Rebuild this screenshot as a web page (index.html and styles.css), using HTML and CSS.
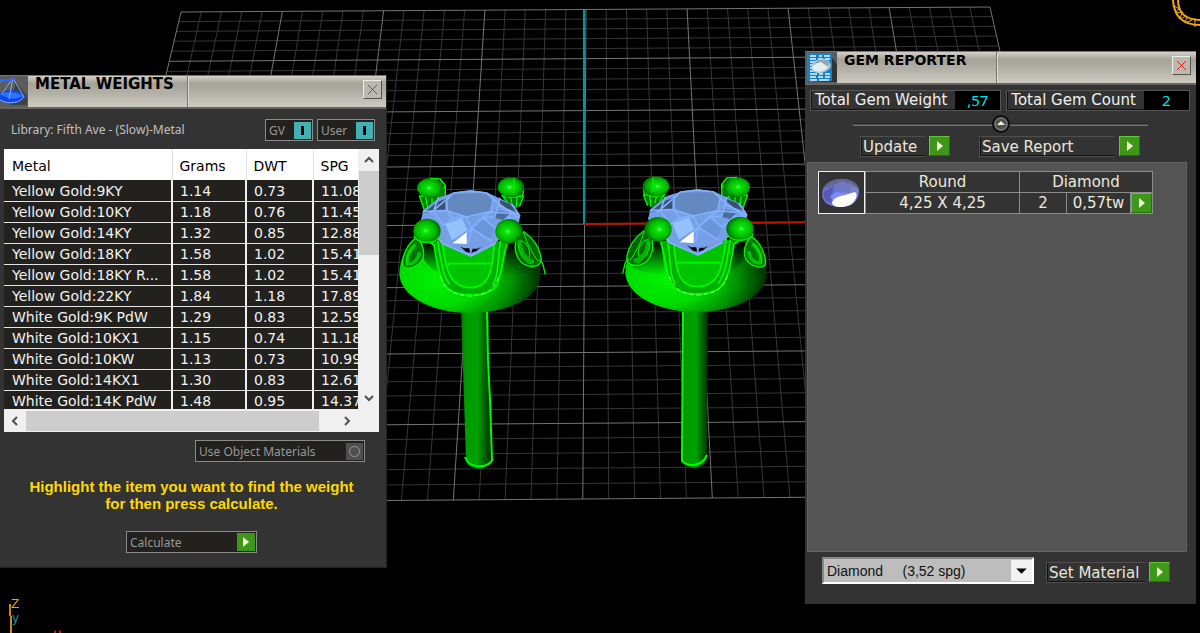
FILE: index.html
```html
<!DOCTYPE html>
<html lang="en">
<head>
<meta charset="utf-8">
<title>Metal Weights and Gem Reporter</title>
<link rel="stylesheet" href="styles.css">
</head>
<body>
<main class="workspace">
  <svg class="viewport" width="1200" height="633" viewBox="0 0 1200 633" aria-label="Model view">
    <defs>
      <radialGradient id="ball" cx=".45" cy=".5" r=".6">
        <stop offset="0" stop-color="#6cff6c"/><stop offset=".15" stop-color="#0be80b"/><stop offset=".6" stop-color="#00b800"/><stop offset="1" stop-color="#005000"/>
      </radialGradient>
      <radialGradient id="bowl-fill" gradientUnits="userSpaceOnUse" cx="150" cy="345" r="310" gradientTransform="translate(0 130) scale(1 .62)">
        <stop offset="0" stop-color="#00f400"/><stop offset=".4" stop-color="#00dc00"/><stop offset=".7" stop-color="#009000"/><stop offset="1" stop-color="#002400"/>
      </radialGradient>
      <linearGradient id="shank"><stop offset="0" stop-color="#007000"/><stop offset=".15" stop-color="#009c00"/><stop offset=".55" stop-color="#00a000"/><stop offset="1" stop-color="#002c00"/></linearGradient>
      <linearGradient id="shade" x2="0" y2="1"><stop offset="0" stop-color="#000"/><stop offset="1" stop-color="#003000" stop-opacity="0"/></linearGradient>
      <g id="back-prongs">
        <path d="M88 92 L104 138 L135 122 L166 92 L164 60 Z" fill="#007a00"/>
        <path d="M332 92 L368 132 L388 122 L401 88 L385 70 Z" fill="#007a00"/>
        <path d="M88 92 L104 138 M106 94 L114 130 M126 98 V124 M146 95 L138 118 M88 93 H128 L150 88 L166 62 L150 42 M166 62 V95 L130 125 M340 95 L352 112 M362 96 L366 118 M382 92 L378 128 M401 92 L388 125 M335 92 L362 98 L400 92 M401 72 L398 92" fill="none" stroke="#00fa00" stroke-width="4"/>
        <ellipse cx="121" cy="69" rx="40" ry="30" fill="url(#ball)"/>
        <ellipse cx="363" cy="67" rx="40" ry="30" fill="url(#ball)"/>
        <path d="M120 40 L150 42 L166 62 M372 40 V84" fill="none" stroke="#00f000" stroke-width="4"/>
      </g>
      <g id="bowl">
        <path d="M75 220 C46 246 28 288 28 328 C32 392 120 444 240 444 C362 444 450 394 452 330 C450 280 430 235 400 200 L345 230 H130 Z" fill="url(#bowl-fill)"/>
      </g>
      <g id="setting">
        <path d="M98 235 L132 232 L152 330 C125 315 100 290 96 265 Z" fill="url(#shade)"/>
        <path d="M352 230 L376 232 L392 285 L440 310 C410 325 365 330 338 335 Z" fill="url(#shade)"/>
        <path d="M80 218 C52 234 34 278 38 302 C50 318 84 306 97 284 C106 262 98 238 85 222 Z" fill="#007400" stroke="#00f400" stroke-width="4"/>
        <path d="M76 240 C56 256 48 280 54 296 C70 300 85 284 88 262" fill="none" stroke="#00c400" stroke-width="11"/>
        <path d="M80 234 C58 252 46 280 50 300" fill="none" stroke="#00f400" stroke-width="3"/>
        <path d="M402 200 C432 222 452 254 454 286 C448 310 412 308 392 290 C376 270 372 245 380 222 Z" fill="#006400" stroke="#00f400" stroke-width="4"/>
        <path d="M390 224 C388 258 404 282 432 292" fill="none" stroke="#00b400" stroke-width="12"/>
        <path d="M384 234 C386 268 402 288 424 298 M402 204 C410 236 426 262 444 290 M396 228 C414 236 422 258 418 278" fill="none" stroke="#00f400" stroke-width="3"/>
        <path d="M447 284 L458 296 L466 328" fill="none" stroke="#00f400" stroke-width="4"/>
        <path d="M120 232 C140 245 143 290 156 338 C170 382 210 393 250 392 C300 390 325 370 332 310 L352 232 L318 228 H152 Z" fill="#00ae00"/>
        <path d="M155 225 C166 300 175 366 240 368 C290 368 308 340 316 225 Z" fill="#00c400"/>
        <path d="M118 232 L132 240 C142 300 148 350 178 374 C210 396 290 396 316 368 C336 340 334 285 352 234 M143 226 C152 280 158 335 180 358 M155 222 C166 290 168 366 240 368 C292 368 306 334 312 240 M332 226 C320 290 328 330 308 360 M172 300 L180 296 H308" fill="none" stroke="#00fb00" stroke-width="5"/>
        <path d="M152 335 C162 375 190 390 240 393 C290 392 316 370 326 335" fill="none" stroke="#7cff7c" stroke-width="3" stroke-dasharray="14 7"/>
      </g>
      <g id="front-prongs">
        <ellipse cx="111" cy="197" rx="41" ry="36" fill="url(#ball)"/>
        <ellipse cx="357" cy="199" rx="41" ry="37" fill="url(#ball)"/>
        <path d="M72 212 C76 236 135 240 150 214" fill="none" stroke="#00f000" stroke-width="4"/>
      </g>
      <g id="gem">
        <path d="M242 76 L290 82 L325 98 L366 118 L390 154 L386 180 L310 238 L243 273 L158 236 L118 195 L94 162 L100 136 L150 96 L196 82 Z" fill="#769fe6"/>
        <path d="M190 86 L288 84 L310 102 L302 140 L242 157 L172 136 L170 104 Z" fill="#6488c0"/>
        <path d="M100 145 L140 112 L166 102 V135 L125 140 Z M325 103 L360 117 L382 142 L335 125 Z" fill="#395273"/>
        <path d="M314 135 L368 145 L342 166 L312 158 Z" fill="#4d6c9e"/>
        <path d="M166 178 L216 160 L232 196 L186 226 Z" fill="#94c2ff"/>
        <path d="M244 188 L284 162 L316 188 L298 225 Z" fill="#6a95d8"/>
        <path d="M188 235 L230 202 V237 Z" fill="#fff"/>
        <path d="M242 78 L190 84 L170 104 L172 137 L228 156 L302 140 L310 103 L290 84 Z M98 140 L170 136 L190 162 L228 156 L245 190 L278 158 L302 140 L388 148 M145 98 L130 140 L160 180 L190 162 L215 158 M310 103 L386 160 M330 98 L314 157 L278 158 L316 190 L342 166 L368 142 L324 120 M120 145 L166 106 M94 162 L158 236 L243 273 L318 235 M230 204 L245 190 L235 235 M245 190 L304 228 M366 118 L390 154 M390 155 L348 160" fill="none" stroke="#82b2ff" stroke-width="5" stroke-linejoin="round"/>
        <path d="M210 244 L222 250 H238 L240 263 L228 260 Z M274 245 L262 251 H248 L244 263 L258 259 Z" fill="#000"/>
      </g>
    </defs>
    <g class="grid" id="grid"></g>
    <path d="M584 9V224" stroke="#00969c" stroke-width="2"/>
    <path d="M584 224L830 222" stroke="#b91400" stroke-width="2"/>
    <g>
      <path d="M461 308 L487 308 L491 462 C486 471 470 471 466 461 Z" fill="url(#shank)"/>
      <path d="M487 310 L488 360 L490 400 L492 461 M465 457 C469 468 485 469 492 461" fill="none" stroke="#00fa00" stroke-width="2"/>
      <path d="M683 308H708L707 460C701 470 688 470 682 461Z" fill="url(#shank)"/>
      <path d="M683 312L682 461C688 467 702 467 707 455" fill="none" stroke="#00fa00" stroke-width="2"/>
    </g>
    <g transform="translate(390 165) scale(.33333)"><use href="#back-prongs"/><use href="#bowl"/><use href="#setting"/><use href="#gem"/><use href="#front-prongs"/></g>
    <g transform="translate(777 164) scale(-.33333 .33333)"><use href="#back-prongs"/></g>
    <g transform="translate(616 164) scale(.33333)"><use href="#bowl"/></g>
    <g transform="translate(778 164) scale(-.33333 .33333)"><use href="#setting"/></g>
    <g transform="translate(617 164) scale(.33333)"><use href="#gem"/></g>
    <g transform="translate(777 163) scale(-.33333 .33333)"><use href="#front-prongs"/></g>
    <path d="M1173 0C1174 16 1182 25 1200 25M1178 0C1178 13 1186 20 1200 20" fill="none" stroke="#f0a818" stroke-width="2"/>
    <path d="M1173 5L1179 9L1175 13L1183 12L1179 19L1187 16L1185 23L1192 20M1195 18V27" fill="none" stroke="#f0a818"/>
    <path d="M10 604V616M11 616V633" fill="none" stroke="#c98c0a" stroke-width="2"/>
    <text class="axis axis-z" x="11" y="608">Z</text>
    <text class="axis axis-y" x="12" y="622">y</text>
    <path d="M54 632H56M59 632H61" stroke="#d01400" stroke-width="3"/>
  </svg>

  <section class="panel metal" aria-labelledby="metal-title">
    <header class="titlebar">
      <svg class="title-icon" viewBox="0 0 28 31" aria-hidden="true">
        <rect width="28" height="31" fill="#5c5c5c"/><path d="M16 6L27 20V29L10 29Z" fill="#414141"/>
        <path d="M0 17C4 13 22 13 25 20C25 27 5 31 0 23Z" fill="#1246e8"/>
        <path d="M1 18C6 15 18 16 23 20C17 24 6 23 1 18Z" fill="#2a74ff"/>
        <path d="M0 5L9 4L14 2M13 2L1 19M13 2L9 23M13 2L24 21M0 24C8 29 22 27 24 20" fill="none" stroke="#7fb0ff"/>
        <path d="M0 4H11L14 2" fill="none" stroke="#2868ff" stroke-width="2"/>
      </svg>
      <h1 class="title" id="metal-title">METAL WEIGHTS</h1>
      <div class="title-rest"><button class="close" aria-label="Close"><svg class="cross" viewBox="0 0 11 11"><path d="M1 1L10 10M10 1L1 10"/></svg></button></div>
    </header>
    <div class="metal-body">
      <div class="library">
        <span class="library-name">Library: Fifth Ave - (Slow)-Metal</span>
        <label class="toggle gv">GV<input class="switch" type="checkbox" checked></label>
        <label class="toggle user">User<input class="switch" type="checkbox" checked></label>
      </div>
      <div class="listview">
        <div class="table-clip">
          <table class="metals">
            <colgroup><col class="c-name"><col class="c-grams"><col class="c-dwt"><col class="c-spg"></colgroup>
            <thead><tr><th>Metal</th><th>Grams</th><th>DWT</th><th>SPG</th></tr></thead>
            <tbody>
              <tr><td>Yellow Gold:9KY</td><td>1.14</td><td>0.73</td><td>11.08</td></tr>
              <tr><td>Yellow Gold:10KY</td><td>1.18</td><td>0.76</td><td>11.45</td></tr>
              <tr><td>Yellow Gold:14KY</td><td>1.32</td><td>0.85</td><td>12.88</td></tr>
              <tr><td>Yellow Gold:18KY</td><td>1.58</td><td>1.02</td><td>15.41</td></tr>
              <tr><td>Yellow Gold:18KY R...</td><td>1.58</td><td>1.02</td><td>15.41</td></tr>
              <tr><td>Yellow Gold:22KY</td><td>1.84</td><td>1.18</td><td>17.89</td></tr>
              <tr><td>White Gold:9K PdW</td><td>1.29</td><td>0.83</td><td>12.59</td></tr>
              <tr><td>White Gold:10KX1</td><td>1.15</td><td>0.74</td><td>11.18</td></tr>
              <tr><td>White Gold:10KW</td><td>1.13</td><td>0.73</td><td>10.99</td></tr>
              <tr><td>White Gold:14KX1</td><td>1.30</td><td>0.83</td><td>12.61</td></tr>
              <tr><td>White Gold:14K PdW</td><td>1.48</td><td>0.95</td><td>14.37</td></tr>
            </tbody>
          </table>
        </div>
        <div class="vscroll">
          <button class="chev" aria-label="Scroll up"><svg viewBox="0 0 12 12"><path d="M2 8L6 4L10 8"/></svg></button>
          <div class="vthumb"></div>
          <button class="chev" aria-label="Scroll down"><svg viewBox="0 0 12 12"><path d="M2 4L6 8L10 4"/></svg></button>
        </div>
        <div class="hscroll">
          <button class="chev" aria-label="Scroll left"><svg viewBox="0 0 12 12"><path d="M8 2L4 6L8 10"/></svg></button>
          <div class="hthumb"></div>
          <button class="chev" aria-label="Scroll right"><svg viewBox="0 0 12 12"><path d="M4 2L8 6L4 10"/></svg></button>
        </div>
      </div>
      <label class="toggle materials">Use Object Materials<input class="ring" type="checkbox"></label>
      <p class="hint">Highlight the item you want to find the weight<br>for then press calculate.</p>
      <button class="toggle calculate">Calculate<span class="go-flat"><svg viewBox="0 0 18 18"><path d="M6 4L12 9L6 14Z"/></svg></span></button>
    </div>
  </section>

  <section class="panel gems" aria-labelledby="gem-title">
    <header class="titlebar">
      <svg class="title-icon gem-icon" viewBox="0 0 32 31" aria-hidden="true">
        <rect width="32" height="31" fill="#5a5a5a"/><path d="M27 6L32 12V30H10L27 28Z" fill="#333"/>
        <rect x="2" y="1" width="25" height="28" fill="#1482c4"/>
        <path d="M5 4H11M14 4H17M19 4H25M5 7H11M13 7H18M20 7H25M5 10H12M5 13H10M5 16H9M5 19H11M5 22H12M14 22H18M20 22H25M5 25H11M13 25H18M20 25H25M5 28H12M14 28H24" stroke="#e6f6ff" stroke-width="1.6"/>
        <ellipse cx="16" cy="14" rx="10" ry="7" fill="#b2c6ce" transform="rotate(-12 16 14)"/>
        <path d="M8 14L13 8L22 8L25 12L15 18Z" fill="#8faab4"/><path d="M7 16C9 11 14 11 16 10L23 15C19 21 10 21 7 16Z" fill="#e2eef0"/>
      </svg>
      <h1 class="title" id="gem-title">GEM REPORTER</h1>
      <div class="title-rest"><button class="close" aria-label="Close"><svg class="cross" viewBox="0 0 11 11"><path d="M1 1L10 10M10 1L1 10"/></svg></button></div>
    </header>
    <div class="totals">
      <div class="total"><span class="total-label">Total Gem Weight</span><output class="total-value">,57</output></div>
      <div class="total"><span class="total-label">Total Gem Count</span><output class="total-value">2</output></div>
    </div>
    <div class="divider"><button class="knob" aria-label="Collapse"><svg viewBox="0 0 18 18"><circle cx="9" cy="9" r="8" fill="#4e4e4e" stroke="#101010" stroke-width="2"/><circle cx="9" cy="9" r="6" fill="none" stroke="#8c8c8c"/><path d="M5 10L9 6L13 10Z" fill="#f4f0d8"/></svg></button></div>
    <div class="actions">
      <button class="action update"><span class="action-label">Update</span><span class="go"><svg viewBox="0 0 19 18"><path d="M7 4L13 9L7 14Z"/></svg></span></button>
      <button class="action save"><span class="action-label">Save Report</span><span class="go"><svg viewBox="0 0 19 18"><path d="M7 4L13 9L7 14Z"/></svg></span></button>
    </div>
    <div class="gem-list">
      <div class="gem-item">
        <svg class="gem-thumb" viewBox="0 0 45 41" role="img" aria-label="Round gem">
          <path d="M3 22C3 12 13 7 23 7C34 7 41 13 40 21C39 30 31 36 22 35C11 35 3 31 3 22Z" fill="#6c74cc"/>
          <path d="M4 17C7 10 15 7 23 7C32 7 38 11 40 17L30 11L15 13Z" fill="#616891"/>
          <path d="M15 13L23 9L33 13L32 21L19 21Z" fill="#7077c6"/><path d="M4 20L15 14L12 31L6 28Z" fill="#555cb8"/><path d="M11 24L17 20L32 21L15 31Z" fill="#7b87ff"/><path d="M33 13L40 18L36 27L30 22Z" fill="#7f84c4"/>
          <path d="M13 31C14 26 20 24 26 23L36 20C40 23 36 30 31 33C24 36 14 36 13 31Z" fill="#fff"/>
        </svg>
        <table class="gem-table">
          <colgroup><col class="g-size"><col class="g-count"><col class="g-weight"></colgroup>
          <tr><td>Round</td><td colspan="2">Diamond</td></tr>
          <tr><td>4,25 X 4,25</td><td>2</td><td><div class="weight-cell"><span class="weight">0,57tw</span><button class="go" aria-label="Open gem"><svg viewBox="0 0 19 18"><path d="M7 4L13 9L7 14Z"/></svg></button></div></td></tr>
        </table>
      </div>
    </div>
    <footer class="material-row">
      <div class="select-wrap">
        <select class="select" aria-label="Material"><option>Diamond &nbsp;&nbsp;&nbsp; (3,52 spg)</option></select>
        <svg class="select-arrow" viewBox="0 0 20 20" aria-hidden="true"><path d="M5 8H15L10 13Z"/></svg>
      </div>
      <button class="action set"><span class="action-label">Set Material</span><span class="go"><svg viewBox="0 0 19 18"><path d="M7 4L13 9L7 14Z"/></svg></span></button>
    </footer>
  </section>
</main>
<script src="grid.js"></script>
</body>
</html>
```
FILE: grid.js
```js
// Construction plane: 40 x 40 cells, a major line every fifth one.
(function () {
  var size = 40;
  var near = { left: [64, 503], right: [1100, 495] };
  var far = { left: [181, 12], right: [990, 7] };

  // Maps the unit square onto the four corners in perspective.
  var a = far.left, b = far.right, c = near.right, d = near.left;
  var dx1 = b[0] - c[0], dx2 = d[0] - c[0], sx = a[0] - b[0] + c[0] - d[0];
  var dy1 = b[1] - c[1], dy2 = d[1] - c[1], sy = a[1] - b[1] + c[1] - d[1];
  var det = dx1 * dy2 - dx2 * dy1;
  var g = (sx * dy2 - dx2 * sy) / det;
  var h = (dx1 * sy - sx * dy1) / det;

  function project(u, v) {
    var w = g * u + h * v + 1;
    var x = ((b[0] - a[0] + g * b[0]) * u + (d[0] - a[0] + h * d[0]) * v + a[0]) / w;
    var y = ((b[1] - a[1] + g * b[1]) * u + (d[1] - a[1] + h * d[1]) * v + a[1]) / w;
    return x.toFixed(1) + ' ' + y.toFixed(1);
  }

  var paths = { minor: '', major: '' };
  for (var i = 0; i <= size; i++) {
    var t = i / size;
    paths[i % 5 ? 'minor' : 'major'] +=
      'M' + project(t, 0) + 'L' + project(t, 1) +
      'M' + project(0, t) + 'L' + project(1, t);
  }

  Object.keys(paths).forEach(function (name) {
    var path = document.createElementNS('http://www.w3.org/2000/svg', 'path');
    path.setAttribute('class', name);
    path.setAttribute('d', paths[name]);
    document.getElementById('grid').appendChild(path);
  });
})();
```
FILE: styles.css
```css
* { box-sizing: border-box; }
body { margin: 0; background: #000; font-family: "DejaVu Sans", sans-serif; }
button { margin: 0; padding: 0; border: 0; background: none; font: inherit; color: inherit; }
svg { display: block; }

.workspace { position: relative; min-height: 100vh; overflow: hidden; }
.viewport { position: absolute; top: 0; left: 0; }
.grid path { fill: none; }
.grid .minor { stroke: #363636; }
.grid .major { stroke: #747474; }
.axis { font-size: 12px; }
.axis-z { fill: #e0a010; }
.axis-y { fill: #00a0a4; }

.panel { position: absolute; display: flex; flex-direction: column; background: #333; }
.metal { top: 75px; left: 0; width: 387px; padding-bottom: 14px; border-right: 1px solid #222; border-bottom: 1px solid #222; }
.gems { top: 51px; right: 4px; width: 391px; padding-bottom: 20px; }

.titlebar { display: flex; height: 34px; border-top: 1px solid #777; border-bottom: 2px solid #65645f; background: linear-gradient(#d2d0c8, #a5a298 25%, #b5b2a9 60%, #cdcbc3); }
.title-icon { width: 28px; height: 31px; flex: none; }
.gem-icon { width: 32px; }
.title { width: 160px; margin: 0; padding-left: 7px; border-right: 1px solid #77756e; color: #000; font-size: 14px; line-height: 17px; font-weight: bold; white-space: nowrap; }
.metal .title { font-size: 15px; }
.title-rest { flex: 1; display: flex; justify-content: flex-end; padding: 4px 4px 0 0; border-left: 1px solid #dddbd3; }
.close { width: 19px; height: 19px; padding: 3px; border: 1px solid; border-color: #eeede8 #55534e #55534e #eeede8; background: #bbb8af; }
.cross { width: 11px; height: 11px; fill: none; stroke: #d42424; }
.gems .title-rest { padding-right: 5px; }

.metal-body { display: flex; flex-direction: column; padding: 10px 7px 0 4px; }
.library { display: flex; align-items: center; gap: 4px; margin-right: 4px; padding-left: 7px; font-size: 12px; font-family: "Noto Sans", sans-serif; color: #c0c0c0; }
.library-name { flex: 1; padding-bottom: 2px; }
.toggle { display: flex; justify-content: space-between; align-items: center; height: 22px; padding: 1px 1px 1px 3px; border: 1px solid #8a8a8a; background: #22211e; color: #999; font-family: "Noto Sans", sans-serif; font-size: 12px; }
.gv { width: 48px; }
.user { width: 58px; }
.switch { appearance: none; width: 17px; height: 17px; margin: 0; background: linear-gradient(#000, #000) center / 3px 9px no-repeat #43b0b4; }
.ring { appearance: none; display: grid; place-items: center; width: 17px; height: 17px; margin: 0; background: #505050; }
.ring::after { content: ""; width: 9px; height: 9px; border: 1px solid #999; border-radius: 50%; }

.listview { display: grid; grid-template-columns: 1fr 21px; grid-template-rows: 260px 23px; margin-top: 8px; background: #f0f0f0; }
.table-clip { overflow: hidden; background: #fff; }
.metals { width: 368px; table-layout: fixed; border-collapse: collapse; background: #22211e; color: #f2f2f2; font-size: 14px; }
.c-name { width: 168px; }
.c-grams { width: 74px; }
.c-dwt { width: 67px; }
.metals th { height: 31px; padding: 2px 7px 0; border-right: 1px solid #e2e2e2; background: #fff; color: #000; font-weight: normal; text-align: left; }
.metals td { height: 21px; padding: 1px 7px 0; border-right: 2px solid #f0f0f0; border-bottom: 1px solid #e4e4e4; line-height: 16px; white-space: nowrap; }
.metals th:first-child, .metals td:first-child { padding-left: 8px; }
.vscroll { display: flex; flex-direction: column; align-items: center; justify-content: space-between; }
.vthumb { width: 20px; height: 84px; margin-bottom: auto; background: #cdcdcd; }
.hscroll { grid-column: 1 / 3; display: flex; align-items: center; padding-right: 21px; }
.hthumb { flex: 1; height: 20px; margin-right: 17px; background: #cdcdcd; }
.chev { flex: none; display: grid; place-items: center; width: 22px; height: 22px; }
.chev svg { width: 12px; height: 12px; }
.chev path { fill: none; stroke: #505050; stroke-width: 2; }

.materials { align-self: flex-end; width: 170px; margin: 8px 14px 0 0; }
.hint { margin: 16px 0 0; color: #ffd800; font: bold 15px/17px "Liberation Sans", sans-serif; text-align: center; }
.calculate { align-self: center; width: 131px; margin-top: 19px; }
.go-flat { width: 18px; height: 18px; background: #3d9819; }
.go-flat path, .go path { fill: #f4f0d8; }

.totals { display: flex; gap: 5px; padding: 5px 6px 0 5px; }
.total { display: flex; height: 21px; border: 1px solid #555; color: #f0f0f0; font-size: 15px; line-height: 19px; }
.total-label { padding: 0 8px 0 3px; white-space: nowrap; border-left: 1px solid #111; border-bottom: 1px solid #111; }
.total-value { width: 45px; background: #000; color: #00e5e5; text-align: center; font-family: "Noto Sans", sans-serif; }
.divider { display: grid; place-items: center; height: 18px; margin: 4px 48px 0; background: linear-gradient(#111, #888) center / 100% 3px no-repeat; }
.knob { width: 18px; height: 18px; }
.actions { display: flex; gap: 29px; margin-top: 3px; padding-left: 55px; }
.action { display: flex; gap: 4px; height: 21px; color: #e8e6da; font-size: 15px; line-height: 20px; text-align: left; }
.action-label { height: 21px; padding-left: 2px; border: solid #4f4f4f; border-width: 1px 0 1px 1px; box-shadow: inset 1px -1px #111; white-space: nowrap; }
.update .action-label { width: 65px; }
.save .action-label { width: 136px; }
.set .action-label { width: 99px; }
.go { flex: none; width: 21px; height: 20px; border: 1px solid; border-color: #64c43a #286e0c #286e0c #64c43a; background: #3d9819; }
.go svg { width: 100%; height: 100%; }

.gem-list { min-height: 390px; margin: 5px 9px 0 2px; padding: 8px 0 0 10px; border: 1px solid #626262; background: #545454; }
.gem-item { display: flex; margin-right: 33px; }
.gem-thumb { width: 47px; height: 43px; flex: none; border: 1px solid #f0f0f0; background: #333; }
.gem-table { flex: 1; table-layout: fixed; border-collapse: collapse; background: #333; color: #eceadc; font-size: 15px; line-height: 20px; text-align: center; }
.gem-table td { height: 21px; padding: 0; border: 1px solid #8c8c8c; }
.g-size { width: 154px; }
.g-count { width: 47px; }
.weight-cell { display: flex; }
.weight { flex: 1; border-right: 1px solid #8c8c8c; }

.material-row { display: flex; align-items: center; gap: 12px; margin-top: 5px; padding-left: 17px; }
.select-wrap { display: grid; width: 212px; border: 2px solid; border-color: #888 #fff #fff #888; background: #bdbdbd; }
.select, .select-arrow { grid-area: 1 / 1; }
.select { appearance: none; height: 23px; padding: 0 3px; border: 0; border-radius: 0; background: none; color: #111; font: 14px/20px "Liberation Sans", sans-serif; }
.select-arrow { justify-self: end; align-self: center; width: 21px; height: 21px; background: #f2f2f2; pointer-events: none; }
.material-row .action { margin-top: 4px; }
```
